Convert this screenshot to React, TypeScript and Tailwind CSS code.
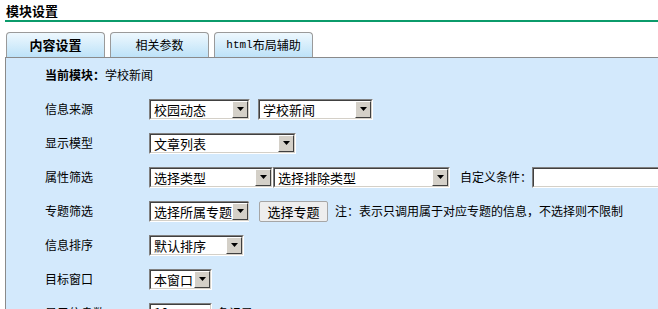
import React from "react"

function Arrow() {
  return (
    <span className="flex h-full w-[16px] shrink-0 items-center justify-center border border-t-white border-l-white border-r-[#404040] border-b-[#404040] bg-[#d4d0c8]">
      <svg width="7" height="4" viewBox="0 0 7 4">
        <path d="M0 0h7L3.5 4z" fill="#000" />
      </svg>
    </span>
  )
}

function Select({ value, width }: { value: string; width: string }) {
  return (
    <span className={`inline-flex h-[21px] shrink-0 border border-t-[#808080] border-l-[#808080] border-b-white border-r-white ${width}`}>
      <span className="flex flex-1 items-center border border-t-[#404040] border-l-[#404040] border-b-[#d4d0c8] border-r-[#d4d0c8] bg-white">
        <span className="flex-1 truncate pl-[3px] text-[13px] leading-[17px]">{value}</span>
        <Arrow />
      </span>
    </span>
  )
}

function Input({ width, value }: { width: string; value?: string }) {
  return (
    <span className={`inline-flex h-[21px] shrink-0 border border-t-[#808080] border-l-[#808080] border-b-white border-r-white ${width}`}>
      <span className="flex flex-1 items-center border border-t-[#404040] border-l-[#404040] border-b-[#d4d0c8] border-r-[#d4d0c8] bg-white pl-[3px] text-[13px]">
        {value}
      </span>
    </span>
  )
}

function Row({ label, children }: { label: string; children?: React.ReactNode }) {
  return (
    <div className="flex h-[34px] items-center">
      <span className="w-[104px] shrink-0">{label}</span>
      {children}
    </div>
  )
}

const tabs = [
  { name: "内容设置", active: true },
  { name: "相关参数" },
  { name: "布局辅助", mono: "html" },
]

export default function App() {
  return (
    <div className="h-[309px] w-[658px] overflow-hidden bg-white font-['Noto_Sans_CJK_SC','Noto_Sans',sans-serif] text-[12px] text-black">
      <div className="h-[20px] pl-[6px] pt-[2px] text-[13px] font-bold leading-[17px]">模块设置</div>
      <div className="ml-[5px] h-[2px] bg-[#0b9b6b]" />

      <div className="mt-[10px] flex gap-[5px] pl-[6px]">
        {tabs.map((t) => (
          <div
            key={t.name}
            className={`flex h-[25px] w-[99px] items-center justify-center rounded-t-[4px] border border-b-0 border-[#9a9a9a] bg-gradient-to-b from-[#eef8fe] to-[#bde2f8] ${t.active ? "text-[13px] font-bold" : ""}`}
          >
            {t.mono && <span className="font-['Liberation_Mono',monospace] text-[11px]">{t.mono}</span>}
            {t.name}
          </div>
        ))}
      </div>

      <div className="ml-[5px] h-[260px] border-l border-t border-[#8a8a8a] bg-[#d3e9fc] pl-[39px]">
        <div className="flex h-[34px] items-center">
          <span className="font-bold">当前模块：</span>
          <span>学校新闻</span>
        </div>
        <Row label="信息来源">
          <Select value="校园动态" width="w-[101px]" />
          <span className="w-[8px]" />
          <Select value="学校新闻" width="w-[115px]" />
        </Row>
        <Row label="显示模型">
          <Select value="文章列表" width="w-[147px]" />
        </Row>
        <Row label="属性筛选">
          <Select value="选择类型" width="w-[124px]" />
          <span className="w-[3px]" />
          <Select value="选择排除类型" width="w-[177px]" />
          <span className="ml-[10px] shrink-0">自定义条件：</span>
          <Input width="w-[140px]" />
        </Row>
        <Row label="专题筛选">
          <Select value="选择所属专题" width="w-[100px]" />
          <button className="ml-[10px] h-[21px] w-[69px] shrink-0 rounded-[2px] border border-[#a6a6a6] bg-[#eeeeee] text-[13px]">
            选择专题
          </button>
          <span className="ml-[7px] shrink-0 whitespace-nowrap">注：表示只调用属于对应专题的信息，不选择则不限制</span>
        </Row>
        <Row label="信息排序">
          <Select value="默认排序" width="w-[95px]" />
        </Row>
        <Row label="目标窗口">
          <Select value="本窗口" width="w-[63px]" />
        </Row>
        <Row label="显示信息数">
          <Input width="w-[63px]" value="10" />
          <span className="ml-[5px]">条记录</span>
        </Row>
      </div>
    </div>
  )
}
